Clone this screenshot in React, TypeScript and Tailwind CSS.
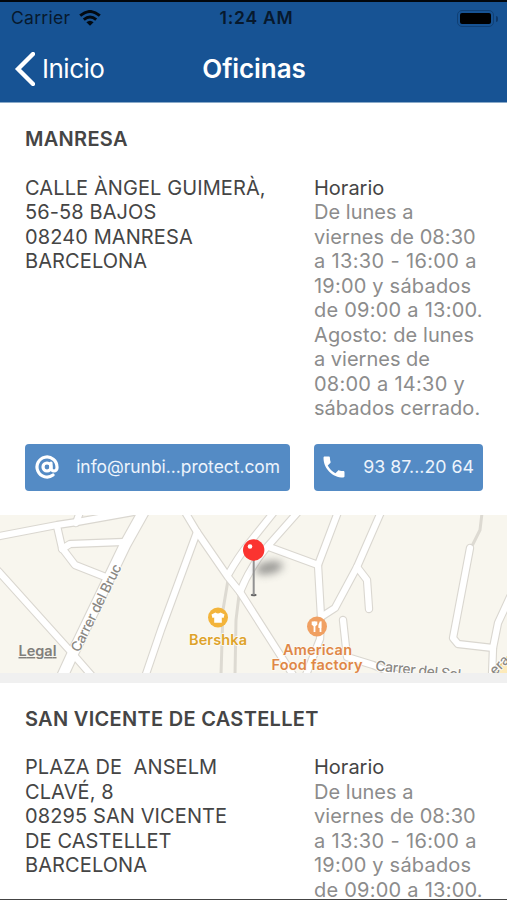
import { AtSign } from "lucide-react"
import { MdPhone } from "react-icons/md"

const hours = [
    { text: "De lunes a", spacing: "tracking-[0.02px]" },
    { text: "viernes de 08:30", spacing: "tracking-[0.08px]" },
    { text: "a 13:30 - 16:00 a", spacing: "tracking-[0.35px]" },
    { text: "19:00 y sábados", spacing: "tracking-[0.2px]" },
    { text: "de 09:00 a 13:00.", spacing: "tracking-[0.24px]" },
    { text: "Agosto: de lunes", spacing: "tracking-[0.1px]" },
    { text: "a viernes de", spacing: "tracking-normal" },
    { text: "08:00 a 14:30 y", spacing: "tracking-[0.25px]" },
    { text: "sábados cerrado.", spacing: "tracking-[0.04px]" },
]

const offices = [
    {
        name: "MANRESA",
        address: ["CALLE ÀNGEL GUIMERÀ,", "56-58 BAJOS", "08240 MANRESA", "BARCELONA"],
    },
    {
        name: "SAN VICENTE DE CASTELLET",
        address: ["PLAZA DE  ANSELM", "CLAVÉ, 8", "08295 SAN VICENTE", "DE CASTELLET", "BARCELONA"],
    },
]

const roads = [
    "M0 21 L57 10 L77 7 L133 -3",
    "M76 8 L80 -3",
    "M57 11 L62 33 L75 50 L108 63",
    "M62 34 L70 29 L123 27",
    "M-3 55 L0 58 L72 138 L92 161",
    "M197 17 L161 115 L145 162",
    "M185 -3 L197 17 L228 62 L240 77 L293 160",
    "M274 -3 L250 27 Q238 42 228 60",
    "M298 -3 L267 32 Q250 52 240 77",
    "M269 32 L318 50 L338 -3",
    "M318 50 L321 102 L320 124 L306 160",
    "M321 102 L335 93 L357 52 L381 -3",
    "M357 52 L367 65 L369 94",
    "M343 105 L347 142 L373 150 L400 161",
    "M470 33 L453 123 L458 129 L493 133",
    "M510 82 L498 108 L493 133 L492 161",
]

const OfficeMap = () => (
    <svg className="block h-[158px] w-full bg-[#f8f6ee]" viewBox="0 0 507 158" fontFamily="Inter, sans-serif">
        <defs>
            <filter id="shade" x="-50%" y="-100%" width="200%" height="300%">
                <feGaussianBlur stdDeviation="4" />
            </filter>
        </defs>

        {/* Footpaths */}
        <g fill="none" stroke="#dddad2" strokeWidth="3">
            <path d="M228 65 L223 95 L221 160" />
            <path d="M239 80 L236 105 L235 160" />
            <path d="M482 -2 L480 15 L472 31" />
        </g>

        {/* Street borders, then the streets on top */}
        <g fill="none" strokeLinecap="round" strokeLinejoin="round">
            <g stroke="#dad7d0" strokeWidth="8.4">
                {roads.map((d) => <path key={d} d={d} />)}
                <path d="M144 -4 L125 30 L73 138 L62 162" strokeWidth="12.5" />
            </g>
            <path d="M496 164 L514 142" stroke="#e9c877" strokeWidth="12" />
            <g stroke="#fff" strokeWidth="6.2">
                {roads.map((d) => <path key={d} d={d} />)}
                <path d="M144 -4 L125 30 L73 138 L62 162" strokeWidth="10.3" />
            </g>
            <path d="M496 164 L514 142" stroke="#fdeab9" strokeWidth="9" />
        </g>

        {/* Street names */}
        <g fill="#8c8984" fontSize="14" fontWeight="500" stroke="#fff" strokeWidth="1.500" paintOrder="stroke">
            <text transform="translate(79 138) rotate(-63.5)" textLength="96">Carrer del Bruc</text>
            <text transform="translate(375 155.500) rotate(6)" textLength="86">Carrer del Sol</text>
            <text transform="translate(495 161) rotate(-45)">era</text>
        </g>
        <text x="18.500" y="141" fill="#817f7b" fontSize="14.500" fontWeight="600" textLength="38" textDecoration="underline">Legal</text>

        {/* Shops */}
        <g transform="translate(218 102.500)">
            <circle r="10" fill="#f3b43b" />
            <path d="M-2.500 -5 L-6.500 -3 L-5.500 0.500 L-3.800 0 V5.300 H3.800 V0 L5.500 0.500 L6.500 -3 L2.500 -5 Q0 -3 -2.500 -5Z" fill="#fff" />
        </g>
        <g transform="translate(317 111.500)">
            <circle r="10" fill="#f0a062" />
            <path d="M-2.500 -5 V5.500 M3.500 5.500 V-5" fill="none" stroke="#fff" strokeWidth="1.800" />
            <path d="M-5.300 -5 H0.300 V-2 Q-2.500 2 -5.300 -2Z" fill="#fff" />
            <path d="M4.300 -5.500 Q0.500 -3 1.500 1.500 H4.300Z" fill="#fff" />
        </g>
        <g fontSize="14.500" fontWeight="600" textAnchor="middle" stroke="#fdfbf5" strokeWidth="1.500" paintOrder="stroke">
            <text x="218" y="129.500" fill="#dea32b" textLength="58">Bershka</text>
            <text x="317.500" y="139.500" fill="#df8747" textLength="69">American</text>
            <text x="317" y="155" fill="#df8747" textLength="91">Food factory</text>
        </g>

        {/* Pin */}
        <ellipse cx="269" cy="53" rx="14" ry="6" fill="#555" opacity="0.6" transform="rotate(-12 268 53)" filter="url(#shade)" />
        <ellipse cx="253.700" cy="80" rx="3" ry="1.300" fill="#666" />
        <path d="M253.700 44 V80" stroke="#929292" strokeWidth="2" />
        <circle cx="253.700" cy="35" r="10.700" fill="#fb3430" />
        <circle cx="250" cy="31.500" r="2.300" fill="#fff" />
    </svg>
)

const WifiIcon = () => (
    <svg className="h-4 w-[22px]" viewBox="0 0 22 16" fill="none" stroke="#020a12" strokeWidth="2.900">
        <path d="M1.200 5.700 Q11 -2.800 20.800 5.700" />
        <path d="M4.800 9.600 Q11 4.200 17.200 9.600" />
        <path d="M11 15.800 L7.400 12.300 Q11 9.200 14.600 12.300Z" fill="#020a12" stroke="none" />
    </svg>
)

const StatusBar = () => (
    <div className="grid h-[33px] grid-cols-3 items-center pr-[9px] pl-[11px] text-[17.5px] text-[#07192d]">
        <div className="flex items-center gap-[9px]">
            <span className="tracking-[0.3px]">Carrier</span>
            <WifiIcon />
        </div>
        <span className="pl-1 text-center font-semibold tracking-[0.75px]">1:24 AM</span>
        <div className="flex items-center justify-end gap-[2px]">
            <div className="h-[17px] w-[37px] rounded-[5px] border border-[#104075] p-[2px]">
                <div className="h-full w-full rounded-[2px] bg-black" />
            </div>
            <div className="h-[6px] w-[2px] rounded-r bg-[#0e3868]" />
        </div>
    </div>
)

const App = () => {
    return (
        <div className="flex h-[900px] w-[507px] flex-col overflow-hidden border-b border-[#444] bg-white font-['Inter',sans-serif] text-[20px] leading-[24.55px] text-[#454545]">
            <header className="h-[103px] shrink-0 border-t-2 border-b border-t-[#02070d] border-b-[#8aaac9] bg-[#175394]">
                <StatusBar />
                <div className="grid h-[67px] grid-cols-3 items-center px-[14px] text-white">
                    <div className="flex items-center gap-[7px]">
                        <svg className="h-[34px] w-[21px]" viewBox="0 0 21 34" fill="none" stroke="currentColor" strokeWidth="4.300">
                            <path d="M19 2 L4 17 L19 32" strokeLinecap="round" />
                        </svg>
                        <span className="pt-px text-[26px] tracking-[-0.5px]">Inicio</span>
                    </div>
                    <h1 className="pt-px pl-px text-center text-[26px] font-semibold tracking-[-0.1px]">Oficinas</h1>
                </div>
            </header>

            {offices.map((office, i) => (
                <section key={office.name} className="shrink-0">
                    <div className="px-[25px] pt-6">
                        <h2 className="font-semibold tracking-[0.3px]">{office.name}</h2>
                        <div className="mt-[24px] grid grid-cols-[289px_1fr] whitespace-pre">
                            <div className="tracking-[0.1px]">
                                {office.address.map((line) => <p key={line}>{line}</p>)}
                            </div>
                            <div className="text-[#8c8c8c]">
                                <p className="text-[#454545]">Horario</p>
                                {hours.map((line) => <p key={line.text} className={line.spacing}>{line.text}</p>)}
                            </div>
                        </div>
                    </div>

                    {i === 0 && (
                        <>
                            <div className="flex gap-6 pt-[22.500px] pb-6 pl-[25px] text-[#edf4fc]">
                                <button className="flex h-[47px] w-[265px] items-center justify-between rounded bg-[#548bc5] px-[10px]">
                                    <AtSign className="h-6 w-6 text-white" strokeWidth={3.2} />
                                    <span className="pt-px text-[17.4px]">info@runbi...protect.com</span>
                                </button>
                                <button className="flex h-[47px] w-[169px] items-center justify-between rounded bg-[#548bc5] pr-[9px] pl-[6px]">
                                    <MdPhone className="h-7 w-7 text-white" />
                                    <span className="pt-px text-[17.8px]">93 87...20 64</span>
                                </button>
                            </div>
                            <OfficeMap />
                            <div className="h-[10px] bg-[#f0f0f0]" />
                        </>
                    )}
                </section>
            ))}
        </div>
    )
}

export default App
